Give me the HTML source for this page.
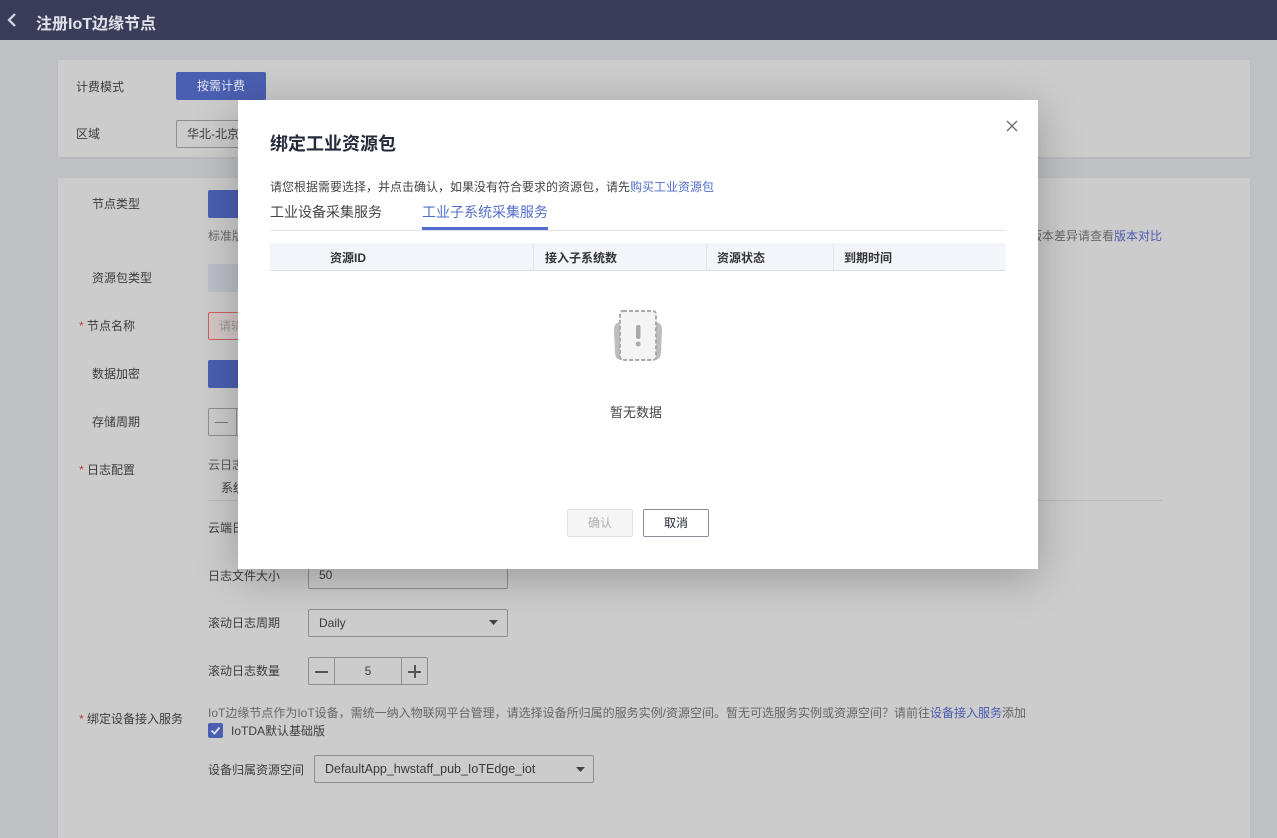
<!DOCTYPE html>
<html><head><meta charset="utf-8">
<style>
*{box-sizing:border-box;margin:0;padding:0}
body{width:1277px;height:834px;overflow:hidden;background:#bfc0c3;font-family:"Liberation Sans","Noto Sans CJK SC",sans-serif;font-size:12px;color:#3a3a3a;position:relative}
.a{position:absolute}
.top{left:0;top:0;width:1277px;height:40px;background:#3a3d5a}
.card{background:#cccccc;box-shadow:0 1px 2px rgba(0,0,0,.06)}
.lbl{color:#3c3c3c;font-size:12px;white-space:nowrap;line-height:16px}
.star{color:#b84040}
.blue{background:#4a5fb1;border-radius:2px}
.box{border:1px solid #8e8e8e;border-radius:2px;background:#cccccc}
.modal{left:238px;top:100px;width:800px;height:469px;background:#fff;box-shadow:0 8px 40px rgba(0,0,0,.25)}
</style></head><body>
<div class="a top">
<svg class="a" style="left:6px;top:12px" width="12" height="16" viewBox="0 0 12 16"><path d="M9 2L3 8l6 6" stroke="#d8dae3" stroke-width="2.2" fill="none"/></svg>
<div class="a" style="left:36px;top:10px;font-size:16px;font-weight:bold;color:#e2e3ea">注册IoT边缘节点</div>
</div>
<div class="a card" style="left:58px;top:60px;width:1192px;height:97px"></div>
<div class="a lbl" style="left:76px;top:79px">计费模式</div>
<div class="a blue" style="left:176px;top:72px;width:90px;height:28px;color:#e6e8f2;text-align:center;line-height:28px">按需计费</div>
<div class="a lbl" style="left:76px;top:126px">区域</div>
<div class="a box" style="left:176px;top:120px;width:70px;height:28px;padding-left:10px;line-height:26px;border-right:none">华北-北京</div>

<div class="a card" style="left:58px;top:178px;width:1192px;height:660px"></div>
<div class="a lbl" style="left:92px;top:196px">节点类型</div>
<div class="a blue" style="left:208px;top:190px;width:40px;height:28px"></div>
<div class="a lbl" style="left:208px;top:228px;color:#666">标准版</div>
<div class="a lbl" style="left:1030px;top:228px;color:#666">版本差异请查看<span style="color:#4a5bb0">版本对比</span></div>
<div class="a lbl" style="left:92px;top:270px">资源包类型</div>
<div class="a" style="left:208px;top:264px;width:40px;height:28px;background:#bcbec6;border-radius:2px"></div>
<div class="a lbl" style="left:79px;top:318px"><span class="star">*</span> 节点名称</div>
<div class="a" style="left:208px;top:312px;width:40px;height:28px;border:1px solid #d06060;background:#d3c7c7;border-radius:2px;color:#999;padding-left:10px;line-height:26px">请输</div>
<div class="a lbl" style="left:92px;top:366px">数据加密</div>
<div class="a blue" style="left:208px;top:360px;width:40px;height:28px"></div>
<div class="a lbl" style="left:92px;top:414px">存储周期</div>
<div class="a box" style="left:208px;top:408px;width:40px;height:28px;border-right:none"><div class="a" style="left:27px;top:-1px;width:1px;height:28px;background:#8e8e8e"></div><div class="a" style="left:6px;top:13px;width:13px;height:1px;background:#777"></div></div>
<div class="a lbl" style="left:79px;top:462px"><span class="star">*</span> 日志配置</div>
<div class="a lbl" style="left:208px;top:457px;color:#555">云日志</div>
<div class="a lbl" style="left:221px;top:480px">系统</div>
<div class="a" style="left:208px;top:500px;width:954px;height:1px;background:#b8b8b8"></div>
<div class="a lbl" style="left:208px;top:520px">云端日</div>
<div class="a lbl" style="left:208px;top:568px">日志文件大小</div>
<div class="a box" style="left:308px;top:562px;width:200px;height:27px;padding-left:10px;line-height:25px">50</div>
<div class="a lbl" style="left:208px;top:615px">滚动日志周期</div>
<div class="a box" style="left:308px;top:609px;width:200px;height:28px;padding-left:10px;line-height:26px">Daily<svg class="a" style="left:180px;top:10px" width="9" height="6"><path d="M0 0h9L4.5 5z" fill="#444"/></svg></div>
<div class="a lbl" style="left:208px;top:663px">滚动日志数量</div>
<div class="a box" style="left:308px;top:657px;width:120px;height:28px">
<div class="a" style="left:25px;top:0;width:1px;height:26px;background:#8e8e8e"></div>
<div class="a" style="left:92px;top:0;width:1px;height:26px;background:#8e8e8e"></div>
<div class="a" style="left:6px;top:13px;width:13px;height:1.5px;background:#555"></div>
<div class="a" style="left:99px;top:13px;width:13px;height:1.5px;background:#555"></div>
<div class="a" style="left:105px;top:7px;width:1.5px;height:13px;background:#555"></div>
<div class="a" style="left:26px;top:0;width:66px;text-align:center;line-height:26px">5</div>
</div>
<div class="a lbl" style="left:79px;top:711px"><span class="star">*</span> 绑定设备接入服务</div>
<div class="a lbl" style="left:208px;top:705px;color:#666">IoT边缘节点作为IoT设备，需统一纳入物联网平台管理，请选择设备所归属的服务实例/资源空间。暂无可选服务实例或资源空间？请前往<span style="color:#4a5bb0">设备接入服务</span>添加</div>
<div class="a" style="left:208px;top:723px;width:15px;height:15px;background:#4a5fb1;border-radius:2px"><svg width="15" height="15"><path d="M3.5 7.5l3 3 5-6" stroke="#dde" stroke-width="1.8" fill="none"/></svg></div>
<div class="a lbl" style="left:231px;top:723px">IoTDA默认基础版</div>
<div class="a lbl" style="left:208px;top:762px">设备归属资源空间</div>
<div class="a box" style="left:314px;top:755px;width:280px;height:28px;padding-left:10px;line-height:26px;font-size:12.5px">DefaultApp_hwstaff_pub_IoTEdge_iot<svg class="a" style="left:261px;top:11px" width="9" height="6"><path d="M0 0h9L4.5 5z" fill="#444"/></svg></div>

<div class="a modal">
<svg class="a" style="left:768px;top:20px" width="12" height="12"><path d="M1 1l10 10M11 1L1 11" stroke="#666" stroke-width="1.3"/></svg>
<div class="a" style="left:32px;top:30px;font-size:18px;font-weight:bold;color:#252b3a">绑定工业资源包</div>
<div class="a" style="left:32px;top:78px;font-size:12px;color:#444">请您根据需要选择，并点击确认，如果没有符合要求的资源包，请先<span style="color:#526ecc">购买工业资源包</span></div>
<div class="a" style="left:32px;top:102px;font-size:14px;color:#444">工业设备采集服务</div>
<div class="a" style="left:184px;top:102px;font-size:14px;color:#526ecc">工业子系统采集服务</div>
<div class="a" style="left:32px;top:130px;width:736px;height:1px;background:#dfe1e6"></div>
<div class="a" style="left:184px;top:127px;width:126px;height:3px;background:#526ecc"></div>
<div class="a" style="left:32px;top:143px;width:736px;height:28px;background:#f3f5fb;border-bottom:1px solid #dfe1e6;font-size:12px;color:#333;font-weight:bold">
<span class="a" style="left:60px;top:6px">资源ID</span>
<div class="a" style="left:263px;top:0;width:1px;height:27px;background:#e3e5ea"></div>
<span class="a" style="left:275px;top:6px">接入子系统数</span>
<div class="a" style="left:436px;top:0;width:1px;height:27px;background:#e3e5ea"></div>
<span class="a" style="left:447px;top:6px">资源状态</span>
<div class="a" style="left:563px;top:0;width:1px;height:27px;background:#e3e5ea"></div>
<span class="a" style="left:574px;top:6px">到期时间</span>
</div>
<svg class="a" style="left:371px;top:208px" width="58" height="56" viewBox="0 0 58 56">
<path d="M5 22c0-6 3-8 8-8v38c-5 0-7-3-7-8z" fill="#bdbdbd"/>
<path d="M53 22c0-6-3-8-8-8v38c5 0 7-3 7-8z" fill="#bdbdbd"/>
<rect x="11" y="3" width="36" height="49" rx="3" fill="#f4f4f4" stroke="#aaa" stroke-width="2" stroke-dasharray="4 2"/>
<rect x="27" y="17" width="4.5" height="14" rx="2" fill="#aaa"/>
<circle cx="29.2" cy="36" r="2.5" fill="#aaa"/>
</svg>
<div class="a" style="left:-2px;width:800px;top:302px;text-align:center;font-size:13px;color:#444">暂无数据</div>
<div class="a" style="left:329px;top:409px;width:66px;height:28px;border:1px solid #dfe1e6;background:#f5f5f6;border-radius:2px;text-align:center;line-height:26px;color:#b0b0b0">确认</div>
<div class="a" style="left:405px;top:409px;width:66px;height:28px;border:1px solid #8a8e99;border-radius:2px;text-align:center;line-height:26px;color:#252b3a">取消</div>
</div>
</body></html>
